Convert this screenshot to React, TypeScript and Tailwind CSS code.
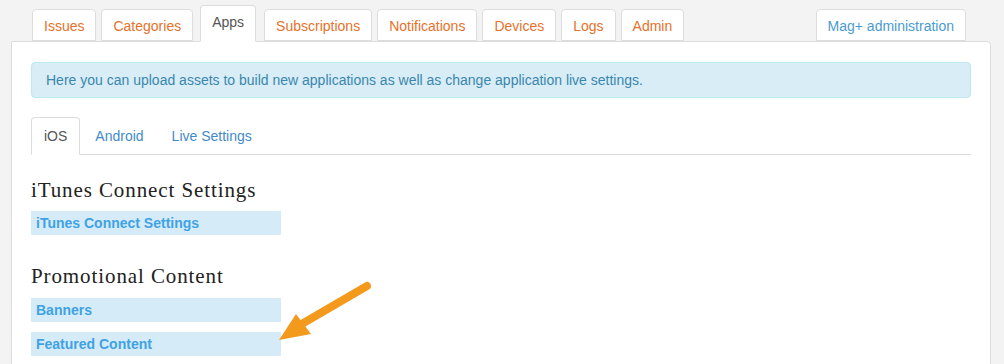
const mainTabs = ['Issues', 'Categories', 'Apps', 'Subscriptions', 'Notifications', 'Devices', 'Logs', 'Admin'];
const subTabs = ['iOS', 'Android', 'Live Settings'];

function LinkBar({ label }: { label: string }) {
    return (
        <div className="w-[250px] h-[24px] bg-[#d5ebf8] pl-[5px] flex items-center text-[14px] font-bold text-[#3fa2e4] leading-none">
            {label}
        </div>
    );
}

export default function App() {
    return (
        <div className="w-[1004px] h-[364px] overflow-hidden bg-[#f3f3f3] font-['Liberation_Sans',Arial,sans-serif] relative">
            <div className="ml-[11px] w-[980px]">
                <div className="flex items-end pl-[21px] pr-[25px] h-[41px]">
                    {mainTabs.map((t) =>
                        t === 'Apps' ? (
                            <div
                                key={t}
                                className="ml-[2px] mr-[8px] h-[37px] mb-[-1px] relative z-10 bg-white border border-[#ddd] border-b-white rounded-t-[4px] px-[11px] pt-[6px] text-[14px] text-[#555]"
                            >
                                {t}
                            </div>
                        ) : (
                            <div
                                key={t}
                                className="mr-[5px] h-[32px] bg-white border border-[#ddd] rounded-t-[4px] px-[11px] pt-[6px] text-[14px] text-[#e6712b]"
                            >
                                {t}
                            </div>
                        ),
                    )}
                    <div className="ml-auto h-[32px] bg-white border border-[#ddd] rounded-t-[4px] px-[11px] pt-[6px] text-[14px] text-[#4a9bd1]">
                        Mag+ administration
                    </div>
                </div>
                <div className="bg-white border border-[#ddd] rounded-tr-[4px] h-[340px] px-[19px] pt-[20px]">
                    <div className="h-[36px] bg-[#d9edf7] border border-[#bce8f1] rounded-[4px] px-[14px] flex items-center text-[14px] text-[#3a87ad]">
                        Here you can upload assets to build new applications as well as change application live settings.
                    </div>
                    <div className="mt-[19px] flex border-b border-[#ddd] h-[38px]">
                        {subTabs.map((t, i) =>
                            i === 0 ? (
                                <div
                                    key={t}
                                    className="mr-[2px] mb-[-1px] bg-white border border-[#ddd] border-b-white rounded-t-[4px] px-[12px] pt-[8px] text-[14px] text-[#555]"
                                >
                                    {t}
                                </div>
                            ) : (
                                <div key={t} className="mr-[2px] px-[13px] pt-[9px] text-[14px] text-[#428bca]">
                                    {t}
                                </div>
                            ),
                        )}
                    </div>
                    <h2 className="mt-[23px] font-['Liberation_Serif','Times_New_Roman',serif] text-[21px] tracking-[0.9px] leading-[24px] text-[#222]">
                        iTunes Connect Settings
                    </h2>
                    <div className="mt-[9px]">
                        <LinkBar label="iTunes Connect Settings" />
                    </div>
                    <h2 className="mt-[29px] font-['Liberation_Serif','Times_New_Roman',serif] text-[21px] tracking-[0.9px] leading-[24px] text-[#222]">
                        Promotional Content
                    </h2>
                    <div className="mt-[10px] flex flex-col gap-[10px]">
                        <LinkBar label="Banners" />
                        <LinkBar label="Featured Content" />
                    </div>
                </div>
            </div>
            <svg className="absolute left-0 top-0" width="1004" height="364" viewBox="0 0 1004 364">
                <line x1="367" y1="286" x2="300" y2="325" stroke="#f39a1d" strokeWidth="8" strokeLinecap="round" />
                <polygon points="279,340 296,314 311,334" fill="#f39a1d" />
            </svg>
        </div>
    );
}
